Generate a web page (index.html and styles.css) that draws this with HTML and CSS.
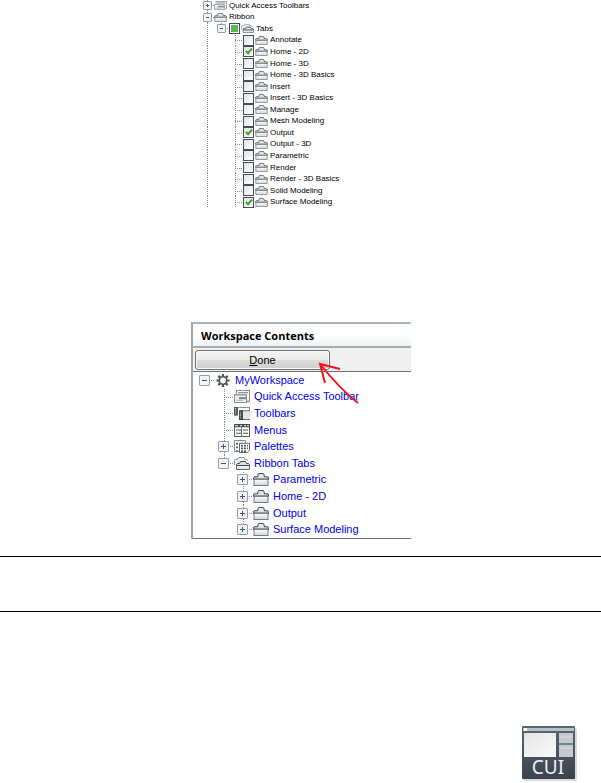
FILE: index.html
```html
<!DOCTYPE html>
<html lang="en">
<head>
<meta charset="utf-8">
<title>Customize workspace contents</title>
<link rel="stylesheet" href="styles.css">
</head>
<body>
<svg class="defs" aria-hidden="true">
  <defs>
    <linearGradient id="fill" x1="0" y1="0" x2="0" y2="1"><stop offset="0" stop-color="#fff"/><stop offset="1" stop-color="#d3d6d9"/></linearGradient>
    <linearGradient id="dark" x1="0" y1="0" x2="0" y2="1"><stop offset="0" stop-color="#5b6670"/><stop offset="1" stop-color="#39434d"/></linearGradient>
    <linearGradient id="pane" x1="0" y1="0" x2="1" y2="1"><stop offset="0" stop-color="#e4e5e6"/><stop offset="1" stop-color="#fafafa"/></linearGradient>
  </defs>
  <symbol id="tab" viewBox="0 0 16 12" preserveAspectRatio="none">
    <path d="M1 5.500H15V11.500H1Z" fill="url(#fill)" stroke="#767c82"/>
    <path d="M.5 5.500V4.500L1.500 3.500H4.500L5 1.500Q5.200.5 6 .5H10Q10.800.5 11 1.500L11.500 3.500H14.500L15.500 4.500V5.500Z" fill="#dfe2e4" stroke="#4a5158"/>
  </symbol>
  <symbol id="tabs" viewBox="0 0 16 13" preserveAspectRatio="none">
    <path d="M.5 8V3.500L1.500 2.500H3.500L4.500.5H10L11 2.500H13L14 4" fill="#eceeef" stroke="#92979c"/>
    <path d="M2.500 8.500H15.500V12.500H2.500Z" fill="url(#fill)" stroke="#656c73"/>
    <path d="M2.500 8.500V7.500L3.500 6.500H5.500L6.500 4.500H11.500L12.500 6.500H14.500L15.500 7.500V8.500Z" fill="#dfe2e4" stroke="#3e454c"/>
  </symbol>
  <symbol id="quick" viewBox="0 0 16 12" preserveAspectRatio="none">
    <path d="M2.500 4V.5H15.500V10.500H13" fill="#f4f5f6" stroke="#8b9095"/>
    <path d="M4 2.500H14" stroke="#7a8086" stroke-width="1"/>
    <path d="M.5 4.500H12.500V11.500H.5Z" fill="#eef0f1" stroke="#858b91"/>
    <path d="M5 6.500H13V8.500H5Z" fill="#82888e"/>
    <path d="M2 9.500H9" stroke="#b5b9bd"/>
  </symbol>
  <symbol id="gear" viewBox="0 0 14 14">
    <path d="M7 0V3M7 11V14M0 7H3M11 7H14M2 2L4 4M10 10L12 12M12 2L10 4M4 10L2 12" stroke="#4b535e" stroke-width="2.400"/>
    <circle cx="7" cy="7" r="4" fill="#fff" stroke="#4b535e" stroke-width="1.800"/>
  </symbol>
  <symbol id="toolbars" viewBox="0 0 16 12" preserveAspectRatio="none">
    <path d="M0 .5H15.500V3" fill="none" stroke="#8b9095"/>
    <path d="M0 0H4V8H0Z" fill="#555d66"/>
    <path d="M1.500 1V7" stroke="#cdd1d5" stroke-dasharray="1 1"/>
    <path d="M6 3.500H16V11.500H6Z" fill="#e4e6e8"/>
    <path d="M6 3.500H16M6 11.500H16" stroke="#6a7178"/>
    <path d="M5 3H9V12H5Z" fill="#444c55"/>
    <path d="M6.500 5V11" stroke="#cdd1d5" stroke-dasharray="1 1"/>
  </symbol>
  <symbol id="menus" viewBox="0 0 16 12" preserveAspectRatio="none">
    <path d="M.5.5H15.500V11.500H.5Z" fill="#fff" stroke="#555d66"/>
    <path d="M0 0H16V3H0Z" fill="#414951"/>
    <path d="M1 1.500H4M6 1.500H8M10 1.500H12M13 1.500H15" stroke="#cdd1d5"/>
    <path d="M2 5.500H7M2 8.500H7M9 5.500H14M9 8.500H14" stroke="#4d555d"/>
    <path d="M7.500 3V11" stroke="#68717a"/>
  </symbol>
  <symbol id="palettes" viewBox="0 0 16 14" preserveAspectRatio="none">
    <path d="M5 12.500H.5V.5H11.500V3" fill="#fff" stroke="#7b8188"/>
    <path d="M3 3V12" stroke="#555d66" stroke-width="2" stroke-dasharray="2 2"/>
    <path d="M5.500 3.500H15.500V11L13 13.500H5.500Z" fill="#fff" stroke="#555d66"/>
    <path d="M7 6H14M7 9H14M7 12H12" stroke="#555d66" stroke-width="2" stroke-dasharray="2 1"/>
  </symbol>
</svg>

<main class="page">
  <ul class="tree tree-small">
    <li class="row"><button class="cell line-v toggle plus" aria-label="Expand"></button><svg class="icon"><use href="#quick"/></svg><span class="name">Quick Access Toolbars</span></li>
    <li class="row"><button class="cell line-v toggle" aria-label="Collapse"></button><svg class="icon"><use href="#tab"/></svg><span class="name">Ribbon</span></li>
    <li class="row"><span class="cell line-v"></span><button class="cell line-top toggle" aria-label="Collapse"></button><label class="item"><input type="checkbox" class="partial"><svg class="icon"><use href="#tabs"/></svg><span class="name">Tabs</span></label></li>
    <li class="row"><span class="cell line-v"></span><span class="cell"></span><span class="cell line-v line-h"></span><label class="item"><input type="checkbox"><svg class="icon"><use href="#tab"/></svg><span class="name">Annotate</span></label></li>
    <li class="row"><span class="cell line-v"></span><span class="cell"></span><span class="cell line-v line-h"></span><label class="item"><input type="checkbox" checked><svg class="icon"><use href="#tab"/></svg><span class="name">Home - 2D</span></label></li>
    <li class="row"><span class="cell line-v"></span><span class="cell"></span><span class="cell line-v line-h"></span><label class="item"><input type="checkbox"><svg class="icon"><use href="#tab"/></svg><span class="name">Home - 3D</span></label></li>
    <li class="row"><span class="cell line-v"></span><span class="cell"></span><span class="cell line-v line-h"></span><label class="item"><input type="checkbox"><svg class="icon"><use href="#tab"/></svg><span class="name">Home - 3D Basics</span></label></li>
    <li class="row"><span class="cell line-v"></span><span class="cell"></span><span class="cell line-v line-h"></span><label class="item"><input type="checkbox"><svg class="icon"><use href="#tab"/></svg><span class="name">Insert</span></label></li>
    <li class="row"><span class="cell line-v"></span><span class="cell"></span><span class="cell line-v line-h"></span><label class="item"><input type="checkbox"><svg class="icon"><use href="#tab"/></svg><span class="name">Insert - 3D Basics</span></label></li>
    <li class="row"><span class="cell line-v"></span><span class="cell"></span><span class="cell line-v line-h"></span><label class="item"><input type="checkbox"><svg class="icon"><use href="#tab"/></svg><span class="name">Manage</span></label></li>
    <li class="row"><span class="cell line-v"></span><span class="cell"></span><span class="cell line-v line-h"></span><label class="item"><input type="checkbox"><svg class="icon"><use href="#tab"/></svg><span class="name">Mesh Modeling</span></label></li>
    <li class="row"><span class="cell line-v"></span><span class="cell"></span><span class="cell line-v line-h"></span><label class="item"><input type="checkbox" checked><svg class="icon"><use href="#tab"/></svg><span class="name">Output</span></label></li>
    <li class="row"><span class="cell line-v"></span><span class="cell"></span><span class="cell line-v line-h"></span><label class="item"><input type="checkbox"><svg class="icon"><use href="#tab"/></svg><span class="name">Output - 3D</span></label></li>
    <li class="row"><span class="cell line-v"></span><span class="cell"></span><span class="cell line-v line-h"></span><label class="item"><input type="checkbox"><svg class="icon"><use href="#tab"/></svg><span class="name">Parametric</span></label></li>
    <li class="row"><span class="cell line-v"></span><span class="cell"></span><span class="cell line-v line-h"></span><label class="item"><input type="checkbox"><svg class="icon"><use href="#tab"/></svg><span class="name">Render</span></label></li>
    <li class="row"><span class="cell line-v"></span><span class="cell"></span><span class="cell line-v line-h"></span><label class="item"><input type="checkbox"><svg class="icon"><use href="#tab"/></svg><span class="name">Render - 3D Basics</span></label></li>
    <li class="row"><span class="cell line-v"></span><span class="cell"></span><span class="cell line-v line-h"></span><label class="item"><input type="checkbox"><svg class="icon"><use href="#tab"/></svg><span class="name">Solid Modeling</span></label></li>
    <li class="row"><span class="cell line-v"></span><span class="cell"></span><span class="cell line-v line-h"></span><label class="item"><input type="checkbox" checked><svg class="icon"><use href="#tab"/></svg><span class="name">Surface Modeling</span></label></li>
  </ul>

  <section class="panel">
    <h2 class="panel-title">Workspace Contents</h2>
    <div class="toolbar"><button class="done"><u>D</u>one</button></div>
    <ul class="tree tree-large">
      <li class="row"><button class="cell toggle" aria-label="Collapse"></button><svg class="icon"><use href="#gear"/></svg><span class="name">MyWorkspace</span></li>
      <li class="row"><span class="cell"></span><span class="cell line-v line-h"></span><svg class="icon"><use href="#quick"/></svg><span class="name">Quick Access Toolbar</span></li>
      <li class="row"><span class="cell"></span><span class="cell line-v line-h"></span><svg class="icon"><use href="#toolbars"/></svg><span class="name">Toolbars</span></li>
      <li class="row"><span class="cell"></span><span class="cell line-v line-h"></span><svg class="icon"><use href="#menus"/></svg><span class="name">Menus</span></li>
      <li class="row"><span class="cell"></span><button class="cell line-v toggle plus" aria-label="Expand"></button><svg class="icon"><use href="#palettes"/></svg><span class="name">Palettes</span></li>
      <li class="row"><span class="cell"></span><button class="cell line-top toggle" aria-label="Collapse"></button><svg class="icon"><use href="#tabs"/></svg><span class="name">Ribbon Tabs</span></li>
      <li class="row"><span class="cell"></span><span class="cell"></span><button class="cell line-v toggle plus" aria-label="Expand"></button><svg class="icon"><use href="#tab"/></svg><span class="name">Parametric</span></li>
      <li class="row"><span class="cell"></span><span class="cell"></span><button class="cell line-v toggle plus" aria-label="Expand"></button><svg class="icon"><use href="#tab"/></svg><span class="name">Home - 2D</span></li>
      <li class="row"><span class="cell"></span><span class="cell"></span><button class="cell line-v toggle plus" aria-label="Expand"></button><svg class="icon"><use href="#tab"/></svg><span class="name">Output</span></li>
      <li class="row"><span class="cell"></span><span class="cell"></span><button class="cell line-top toggle plus" aria-label="Expand"></button><svg class="icon"><use href="#tab"/></svg><span class="name">Surface Modeling</span></li>
    </ul>
    <svg class="arrow" viewBox="0 0 42 42" aria-hidden="true"><path d="M40 41Q22 27 2 2M22 7L2 2L7 21" fill="none" stroke="#f4141a" stroke-width="2"/></svg>
  </section>

  <div class="note"></div>

  <svg class="cui" viewBox="0 0 56 56" role="img" aria-label="CUI">
    <rect x="2" y="2" width="54" height="53" rx="2" fill="#000" opacity=".15"/>
    <rect x="1" y="0" width="53" height="53" rx="1" fill="url(#dark)"/>
    <path d="M2 2H53V5H2Z" fill="#b6c0c9"/>
    <path d="M3 2H6V5H3Z" fill="#fff"/>
    <path d="M3 7H35V31H3Z" fill="url(#pane)"/>
    <path d="M38 7H52V31H38Z" fill="#c3c9ce"/>
    <path d="M38 18H52" stroke="#71868f" stroke-width="2"/>
    <path d="M39 11H51M39 22H51" stroke="#d9dde0"/>
    <text x="27" y="48" text-anchor="middle" class="cui-text">CUI</text>
  </svg>
</main>
</body>
</html>
```
FILE: styles.css
```css
* { box-sizing: border-box; }

body {
  margin: 0;
  background: #fff;
  color: #000;
  font-family: "Liberation Sans", Arial, sans-serif;
}

.defs { position: absolute; width: 0; height: 0; }

.page { display: flex; flex-direction: column; align-items: flex-start; }

/* Trees */
.tree {
  --cell: 14px;
  --dot: #8c8c8c;
  display: grid;
  grid-auto-rows: 1fr;
  margin: 0;
  padding: 0;
  list-style: none;
}

.row, .item { display: flex; align-items: center; min-height: 0; }
.name { white-space: nowrap; line-height: 1; }

.cell {
  position: relative;
  flex: none;
  align-self: stretch;
  width: var(--cell);
  padding: 0;
  border: 0;
  background: none;
}

.line-v::before, .line-top::before {
  content: "";
  position: absolute;
  top: 0;
  bottom: 0;
  left: 50%;
  width: 1px;
  background: repeating-linear-gradient(var(--dot) 0 1px, transparent 1px 2px);
}
.line-top::before { bottom: 50%; }

.line-h::after {
  content: "";
  position: absolute;
  top: 50%;
  left: 50%;
  right: 0;
  height: 1px;
  background: repeating-linear-gradient(90deg, var(--dot) 0 1px, transparent 1px 2px);
}

.toggle {
  display: grid;
  place-items: center;
  background: repeating-linear-gradient(90deg, var(--dot) 0 1px, transparent 1px 2px) right center / 50% 1px no-repeat;
}
.toggle::after {
  content: "";
  position: relative;
  width: var(--box);
  height: var(--box);
  border: 1px solid #989ea6;
  border-radius: 1px;
  background: linear-gradient(#36549c, #36549c) center / var(--sign) 1px no-repeat, #f3f3f3;
}
.plus::after {
  background:
    linear-gradient(#36549c, #36549c) center / var(--sign) 1px no-repeat,
    linear-gradient(#36549c, #36549c) center / 1px var(--sign) no-repeat,
    #f3f3f3;
}

.tree-small {
  --box: 7px;
  --sign: 3px;
  height: 208px;
  margin-left: 200px;
  font-size: 8px;
}
.tree-small .icon { flex: none; width: 13px; height: 9px; margin-right: 2px; }
.tree-small .item { padding-left: 1px; }

input[type="checkbox"] {
  appearance: none;
  flex: none;
  width: 11px;
  height: 11px;
  margin: 0 1px 0 0;
  border: 1px solid #454d5a;
  background: linear-gradient(135deg, #dfe2e6, #fff);
}
input[type="checkbox"].partial { background: #59b659; border-color: #454d5a; box-shadow: inset 0 0 0 1px #fff; }
input[type="checkbox"]:checked::before {
  content: "";
  display: block;
  width: 2px;
  height: 5px;
  margin: 0 auto;
  border: solid #41a317;
  border-width: 0 2px 2px 0;
  box-sizing: content-box;
  transform: rotate(42deg);
}

/* Workspace panel */
.panel {
  position: relative;
  width: 220px;
  margin: 114px 0 0 191px;
  border-left: 2px solid #9aa5ae;
  background: #f0f0f0;
}

.panel-title {
  margin: 0;
  padding: 1px 8px 0;
  border-top: 2px solid #a9b4bd;
  border-bottom: 2px solid #a3adb6;
  background: linear-gradient(#fff, #fff 50%, #eff1f4);
  font: bold 11px/21px "Open Sans", "Noto Sans", sans-serif;
}

.toolbar { padding: 2px 2px 1px; }

.done {
  display: block;
  width: 135px;
  height: 20px;
  padding: 0;
  border: 1px solid #707070;
  border-radius: 3px;
  background: linear-gradient(#f4f4f4, #ebebeb 48%, #dcdcdc 52%, #cfcfcf);
  box-shadow: inset 0 0 0 1px #fafafa;
  font: 11px/16px "Liberation Sans", Arial, sans-serif;
  color: #000;
}

.tree-large {
  --cell: 19px;
  --box: 9px;
  --sign: 5px;
  height: 168px;
  padding-left: 2px;
  border-top: 1px solid #6d7278;
  border-bottom: 1px solid #6d7278;
  background: #fff;
  color: #0000f0;
  font-size: 11px;
}
.tree-large .icon { flex: none; width: 16px; height: 13px; margin: 0 4px 0 1px; }

.arrow { position: absolute; left: 125px; top: 40px; width: 42px; height: 42px; }

/* Ruled note area */
.note {
  align-self: stretch;
  height: 56px;
  margin-top: 17px;
  border-top: 1px solid #000;
  border-bottom: 1px solid #000;
}

.cui {
  align-self: flex-end;
  width: 56px;
  height: 56px;
  margin: 114px 24px 0 0;
}
.cui-text { font: 19px "Noto Sans", sans-serif; fill: #eef1f3; }
```
